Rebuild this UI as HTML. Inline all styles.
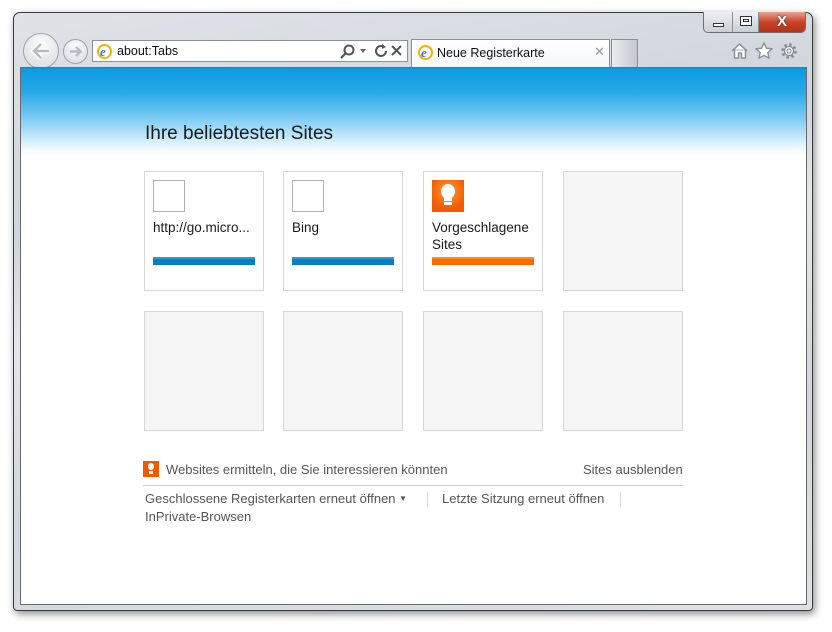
<!DOCTYPE html>
<html><head><meta charset="utf-8"><style>
*{margin:0;padding:0;box-sizing:border-box}
body{width:832px;height:632px;background:#fff;position:relative;overflow:hidden;font-family:"Liberation Sans",sans-serif}
.win{position:absolute;left:13px;top:12px;width:800px;height:599px;border:1px solid #3a3a3a;border-radius:7px 7px 4px 4px;background:linear-gradient(170deg,#dfe3e8 0%,#cfd5dc 30%,#e4e7eb 45%,#d0d6dd 70%,#dde1e6 100%);box-shadow:2px 3px 8px rgba(0,0,0,.45)}
.content{position:absolute;left:20px;top:67px;width:787px;height:538px;border:1px solid #6a6a6a;background:linear-gradient(#0a9be0 0px,#2aa9e8 25px,#7ccbf1 50px,#c9e9f9 70px,#f4fbfe 82px,#fff 88px)}
.t{position:absolute;color:#555;font-size:13px;white-space:nowrap}
.tile{position:absolute;width:120px;height:120px;border:1px solid #d6d6d6;background:#fff}
.empty{background:#f5f5f5}
.fav{position:absolute;left:8px;top:8px;width:32px;height:32px;border:1px solid #b0b0b0;background:#fff}
.bar{position:absolute;left:8px;top:85px;width:102px;height:8px;background:#0a7fc0;border-top:2px solid #2f97d2}
.lbl{position:absolute;left:8px;top:47px;font-size:13.5px;color:#1a1a1a;line-height:17px}
</style></head><body>
<div class="win"></div>
<div style="position:absolute;left:703px;top:12px;width:103px;height:21px;border:1px solid #6b6f75;border-top:none;border-radius:0 0 5px 5px;overflow:hidden;display:flex">
<div style="width:29px;background:linear-gradient(#eef0f3,#c9ced5);border-right:1px solid #8a8f96;position:relative"><div style="position:absolute;left:9px;top:11px;width:11px;height:4px;border:1px solid #333;background:#fff"></div></div>
<div style="width:26px;background:linear-gradient(#eef0f3,#c9ced5);border-right:1px solid #8a8f96;position:relative"><div style="position:absolute;left:7px;top:4px;width:12px;height:10px;border:1px solid #333;background:#fff"><div style="margin:2px;width:6px;height:3px;border:1px solid #333"></div></div></div>
<div style="flex:1;background:linear-gradient(#e8a493,#c8432a 50%,#b83218);color:#fff;font-weight:bold;font-size:15px;text-align:center;line-height:19px;text-shadow:0 0 2px #333">X</div>
</div>
<div style="position:absolute;left:23px;top:33px;width:36px;height:36px;border-radius:50%;border:1px solid #9aa2ab;background:radial-gradient(circle at 50% 30%,#fafbfc,#d5dadf)"><svg width="34" height="34" style="position:absolute;left:0;top:0"><path d="M25 17H11M17 10l-7 7 7 7" stroke="#fff" stroke-width="5" fill="none"/><path d="M25 17H11M17 10l-7 7 7 7" stroke="#b5bcc4" stroke-width="2.5" fill="none"/></svg></div>
<div style="position:absolute;left:63px;top:39px;width:25px;height:25px;border-radius:50%;border:1px solid #9aa2ab;background:radial-gradient(circle at 50% 30%,#fafbfc,#d5dadf)"><svg width="23" height="23" style="position:absolute;left:0;top:0"><path d="M6 11.5h10M12 7l4.5 4.5L12 16" stroke="#b5bcc4" stroke-width="2.5" fill="none"/></svg></div>
<div style="position:absolute;left:92px;top:40px;width:316px;height:22px;border:1px solid #8a9099;background:#fff"></div>
<div style="position:absolute;left:97px;top:44px;width:15px;height:15px;border-radius:50%;border:2px solid #f0b400;"><div style="position:absolute;left:1px;top:0;font:italic bold 13px 'Liberation Serif',serif;color:#2a7cd6;line-height:11px">e</div></div>
<div class="t" style="left:117px;top:44px;color:#111;font-size:12.5px">about:Tabs</div>
<svg width="80" height="20" style="position:absolute;left:338px;top:42px"><circle cx="11" cy="8" r="4.5" stroke="#555" stroke-width="2" fill="none"/><path d="M8 11l-5 5" stroke="#555" stroke-width="2.2"/><path d="M22 7h6l-3 4z" fill="#666"/><path d="M46 5a5 5 0 1 0 2 4" stroke="#555" stroke-width="2" fill="none"/><path d="M44 2l4 3-4 2z" fill="#555"/><path d="M54 4l9 9M63 4l-9 9" stroke="#555" stroke-width="2"/></svg>
<div style="position:absolute;left:411px;top:39px;width:199px;height:28px;border:1px solid #8a9099;border-bottom:none;background:linear-gradient(#fff,#f4f6f8)"></div>
<div style="position:absolute;left:418px;top:45px;width:15px;height:15px;border-radius:50%;border:2px solid #f0b400;"><div style="position:absolute;left:1px;top:0;font:italic bold 13px 'Liberation Serif',serif;color:#2a7cd6;line-height:11px">e</div></div>
<div class="t" style="left:437px;top:46px;color:#111;font-size:12.5px">Neue Registerkarte</div>
<div class="t" style="left:594px;top:44px;font-size:13px;color:#999">&#10005;</div>
<div style="position:absolute;left:611px;top:39px;width:27px;height:28px;border:1px solid #8a9099;border-bottom:none;background:linear-gradient(90deg,#e9ecef,#c3c8ce)"></div>
<svg width="70" height="22" style="position:absolute;left:730px;top:41px"><path d="M2 10L9.5 3 17 10M4.5 8v9h4v-5h3v5h4V8" stroke="#8a8f96" stroke-width="1.5" fill="#fff" stroke-linejoin="round"/><path d="M34 2l2.4 5.2 5.6.6-4.2 3.8 1.2 5.6-5-2.9-5 2.9 1.2-5.6-4.2-3.8 5.6-.6z" stroke="#8a8f96" stroke-width="1.4" fill="#fff" stroke-linejoin="round"/><circle cx="59" cy="10" r="6" stroke="#8a8f96" stroke-width="3.5" stroke-dasharray="2.4 2.3" fill="none"/><circle cx="59" cy="10" r="4.5" stroke="#8a8f96" stroke-width="1.3" fill="#fff"/><circle cx="59" cy="10" r="2" stroke="#8a8f96" stroke-width="1.2" fill="none"/></svg>
<div class="content"></div>
<div class="t" style="left:145px;top:123px;font-size:19px;color:#1a1a1a">Ihre beliebtesten Sites</div>
<div class="tile" style="left:144px;top:171px"><div class="fav"></div><div class="lbl">http://go.micro...</div><div class="bar"></div></div>
<div class="tile" style="left:283px;top:171px"><div class="fav"></div><div class="lbl">Bing</div><div class="bar"></div></div>
<div class="tile" style="left:423px;top:171px"><div class="fav" style="border:none;background:radial-gradient(circle at 50% 35%,#ff9a3c,#f25a00 70%)"><div style="position:absolute;left:9px;top:4px;width:14px;height:15px;border-radius:50%;background:#fff"></div><div style="position:absolute;left:12px;top:16px;width:8px;height:5px;background:#fff"></div><div style="position:absolute;left:12px;top:22px;width:8px;height:3px;background:#fff"></div></div><div class="lbl">Vorgeschlagene<br>Sites</div><div class="bar" style="background:#ff6a00;border-top-color:#ff8c1a"></div></div>
<div class="tile empty" style="left:563px;top:171px"></div>
<div class="tile empty" style="left:144px;top:311px"></div>
<div class="tile empty" style="left:283px;top:311px"></div>
<div class="tile empty" style="left:423px;top:311px"></div>
<div class="tile empty" style="left:563px;top:311px"></div>
<div style="position:absolute;left:143px;top:461px;width:16px;height:16px;background:#f25a00"><div style="position:absolute;left:5px;top:2px;width:6px;height:7px;border-radius:3px;background:#fff"></div><div style="position:absolute;left:6px;top:10px;width:4px;height:3px;background:#fff"></div></div>
<div class="t" style="left:166px;top:462px">Websites ermitteln, die Sie interessieren könnten</div>
<div class="t" style="left:583px;top:462px">Sites ausblenden</div>
<div style="position:absolute;left:143px;top:485px;width:540px;height:1px;background:#cfcfcf"></div>
<div class="t" style="left:145px;top:491px">Geschlossene Registerkarten erneut öffnen <span style="font-size:8px;position:relative;top:-2px">&#9660;</span></div>
<div style="position:absolute;left:427px;top:492px;width:1px;height:15px;background:#ddd"></div>
<div class="t" style="left:442px;top:491px">Letzte Sitzung erneut öffnen</div>
<div style="position:absolute;left:620px;top:492px;width:1px;height:15px;background:#ddd"></div>
<div class="t" style="left:145px;top:509px">InPrivate-Browsen</div>
</body></html>
